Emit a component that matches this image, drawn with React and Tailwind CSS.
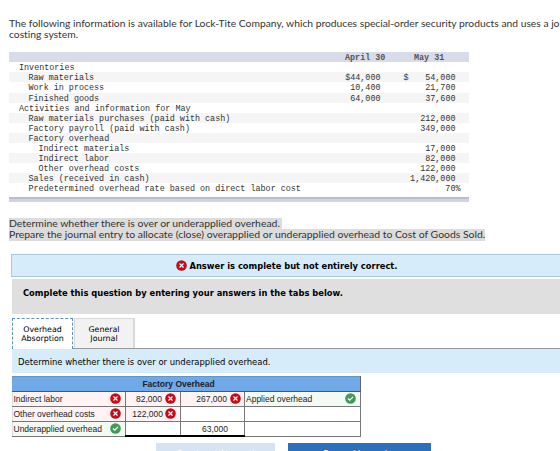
const rows = [
  { label: 'Inventories', indent: 'pl-[10px]' },
  { label: 'Raw materials', indent: 'pl-[19.5px]', april: '$44,000', may: '54,000', sign: '$' },
  { label: 'Work in process', indent: 'pl-[19.5px]', april: '10,400', may: '21,700' },
  { label: 'Finished goods', indent: 'pl-[19.5px]', april: '64,000', may: '37,600' },
  { label: 'Activities and information for May', indent: 'pl-[10px]' },
  { label: 'Raw materials purchases (paid with cash)', indent: 'pl-[19.5px]', may: '212,000' },
  { label: 'Factory payroll (paid with cash)', indent: 'pl-[19.5px]', may: '349,000' },
  { label: 'Factory overhead', indent: 'pl-[19.5px]' },
  { label: 'Indirect materials', indent: 'pl-[29.5px]', may: '17,000' },
  { label: 'Indirect labor', indent: 'pl-[29.5px]', may: '82,000' },
  { label: 'Other overhead costs', indent: 'pl-[29.5px]', may: '122,000' },
  { label: 'Sales (received in cash)', indent: 'pl-[19.5px]', may: '1,420,000' },
  { label: 'Predetermined overhead rate based on direct labor cost', indent: 'pl-[19.5px]', may: '70%' },
];

function Wrong() {
  return (
    <svg className="size-[11px] shrink-0" viewBox="0 0 11 11">
      <circle cx="5.5" cy="5.5" r="5.3" fill="#c90a14" />
      <path d="M3.5 3.5 7.5 7.5M7.5 3.5 3.5 7.5" stroke="#fff" strokeWidth="1.2" />
    </svg>
  );
}

function Right() {
  return (
    <svg className="size-[11px] shrink-0" viewBox="0 0 11 11">
      <circle cx="5.5" cy="5.5" r="5.3" fill="#43985a" />
      <path d="M3 5.6 4.8 7.2 8 3.9" fill="none" stroke="#fff" strokeWidth="1.3" />
    </svg>
  );
}

function InfoTable() {
  return (
    <div className="mt-[11px] ml-[9px] w-[460px] font-['Liberation_Mono','Courier_New',monospace] text-[8.42px] leading-[12px] text-[#333]">
      <div className="flex h-[10.5px] bg-[#d8dce8] font-bold text-[#555] whitespace-pre">
        <span className="ml-[336px] w-[69px]">April 30</span>
        <span>May 31</span>
      </div>
      {rows.map((row, i) => (
        <div
          key={row.label}
          className={`flex h-[10.04px] whitespace-nowrap ${i % 2 ? 'bg-[#f5f5f6]' : ''}`}
        >
          <span className={`w-[302px] ${row.indent}`}>{row.label}</span>
          <span className="w-[69.5px] text-right">{row.april}</span>
          <span className="w-[24px] pl-[23px]">{row.sign}</span>
          <span className={row.may === '70%' ? 'w-[56px] text-right' : 'w-[51px] text-right'}>{row.may}</span>
        </div>
      ))}
      <div className="mt-[4px] h-[5px] border-t-2 border-[#b9bdd0] bg-[#ccd4e6]" />
    </div>
  );
}

function AnswerTable() {
  return (
    <table className="mt-[3px] ml-[12px] w-[348px] table-fixed border-collapse font-['Liberation_Sans',Arial,sans-serif] text-[8.5px] leading-[10px] text-[#222]">
      <colgroup>
        <col className="w-[113px]" />
        <col className="w-[55px]" />
        <col className="w-[64px]" />
        <col className="w-[116px]" />
      </colgroup>
      <tbody>
        <tr className="h-[15px] bg-[#70a9e8]">
          <td colSpan={4} className="border border-t-[#6393c8] border-r-[#666] border-b-[#555] border-l-[#70a9e8] pr-[16px] text-center font-bold">
            Factory Overhead
          </td>
        </tr>
        <tr className="h-[15px]">
          <td className="border border-[#777] border-l-[#ddd] bg-[#fff3f3]">
            <div className="flex items-center justify-between pr-[4px] pl-[0.5px]">Indirect labor<Wrong /></div>
          </td>
          <td className="border border-[#777] bg-[#fff3f3]">
            <div className="flex items-center justify-end gap-[3px] pr-[4px]">82,000<Wrong /></div>
          </td>
          <td className="border border-[#777] bg-[#fff3f3]">
            <div className="flex items-center justify-end gap-[3px] pr-[3px]">267,000<Wrong /></div>
          </td>
          <td className="border border-[#777] bg-[#f3faf3]">
            <div className="flex items-center justify-between pr-[4px] pl-px">Applied overhead<Right /></div>
          </td>
        </tr>
        <tr className="h-[15px]">
          <td className="border border-[#777] border-l-[#ddd] bg-[#fff3f3]">
            <div className="flex items-center justify-between pr-[4px] pl-[0.5px]">Other overhead costs<Wrong /></div>
          </td>
          <td className="border border-[#777] bg-[#fff3f3]">
            <div className="flex items-center justify-end gap-[2px] pr-[4px]">122,000<Wrong /></div>
          </td>
          <td className="border border-[#777]" />
          <td className="border border-[#777]" />
        </tr>
        <tr className="h-[15px]">
          <td className="border border-[#777] border-l-[#ddd] bg-[#f3faf3]">
            <div className="flex items-center justify-between pr-[4px] pl-[0.5px]">Underapplied overhead<Right /></div>
          </td>
          <td className="border border-b-2 border-[#777] border-b-black" />
          <td className="border border-b-2 border-[#777] border-b-black pr-[16px] text-right">63,000</td>
          <td className="border border-[#777]" />
        </tr>
      </tbody>
    </table>
  );
}

function App() {
  return (
    <div className="h-[451px] w-[560px] overflow-hidden bg-white font-['DejaVu_Sans',Verdana,sans-serif] text-black">
      <div className="ml-[9px] pt-[17.5px] font-[Lato,sans-serif] text-[10.3px] leading-[11.7px] whitespace-nowrap text-[#333] [font-variant-ligatures:none]">
        <p>The following information is available for Lock-Tite Company, which produces special-order security products and uses a job order</p>
        <p>costing system.</p>
      </div>

      <InfoTable />

      <div className="mt-[16px] ml-[9px] font-[Lato,sans-serif] text-[10.43px] leading-[11.4px] whitespace-nowrap text-[#333] [font-variant-ligatures:none]">
        <p className="w-fit bg-[#dcdcdc] pr-[2px]">Determine whether there is over or underapplied overhead.</p>
        <p className="w-fit bg-[#dcdcdc]">Prepare the journal entry to allocate (close) overapplied or underapplied overhead to Cost of Goods Sold.</p>
      </div>

      <div className="mt-[13.2px] ml-[11px] flex h-[23px] items-center border border-r-0 border-[#a8c9e4] bg-[#d6ecfa] pt-px pl-[164px] text-[8.33px] font-bold whitespace-nowrap">
        <Wrong />
        <span className="ml-[2.5px]">Answer is complete but not entirely correct.</span>
      </div>
      <div className="mt-[2px] ml-[12px] h-[35px] bg-[#dfdfdf] pt-[9.5px] pl-[11px] text-[8.35px] leading-[11px] font-bold whitespace-nowrap">
        Complete this question by entering your answers in the tabs below.
      </div>

      {/* Tabs */}
      <div className="mt-[4px] ml-[12px] flex h-[31px] gap-px border-b border-[#999] text-center text-[7.9px] leading-[9.5px]">
        <div className="mb-[-1px] w-[61px] border border-b-0 border-dashed border-[#5d8fc9] bg-white pt-[6px]">Overhead<br />Absorption</div>
        <div className="w-[61px] border border-r-2 border-b-0 border-[#d8d8d8] bg-[#f2f2f2] pt-[6px]">General<br />Journal</div>
      </div>
      <div className="ml-[12px] h-[24px] bg-[#d6ecfa] pl-[6px] text-[8.43px] leading-[26px] whitespace-nowrap">
        Determine whether there is over or underapplied overhead.
      </div>

      <AnswerTable />

      <div className="mt-[6px] ml-[156px] flex gap-[13px] text-center text-[8.4px] leading-[11px] whitespace-nowrap text-white">
        <div className="h-[20px] w-[119px] bg-[#d6e3f3] pt-[6px]">&lt; Overhead Absorption</div>
        <div className="h-[20px] w-[143px] bg-[#2c6fbb] pt-[6px]">General Journal &gt;</div>
      </div>
    </div>
  );
}

export default App;
